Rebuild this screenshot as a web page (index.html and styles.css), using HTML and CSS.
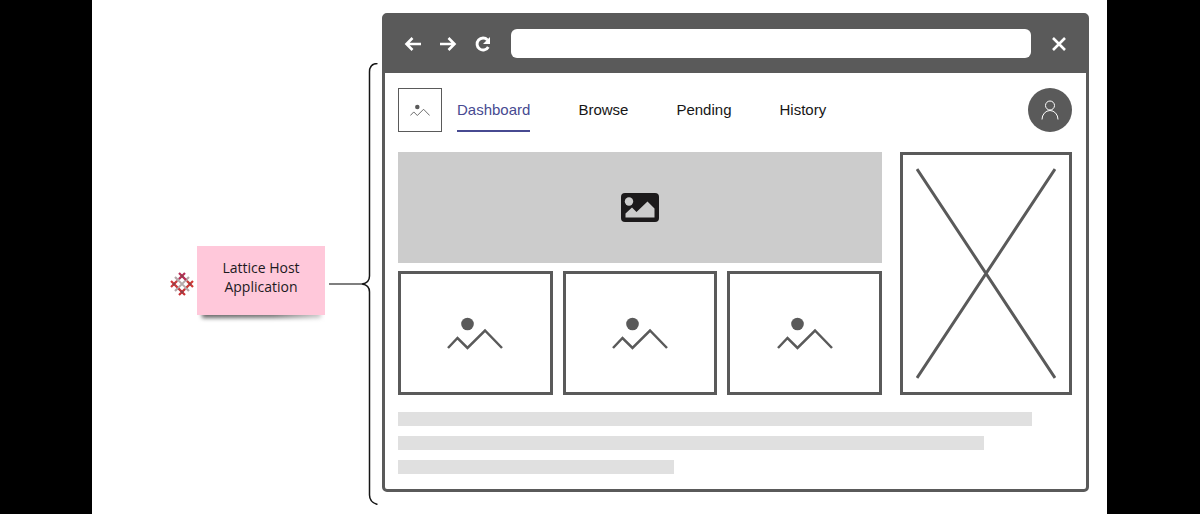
FILE: index.html
```html
<!DOCTYPE html>
<html lang="en">
<head>
<meta charset="utf-8">
<title>Lattice Host Application</title>
<link rel="stylesheet" href="styles.css">
</head>
<body>
<svg class="defs" aria-hidden="true">
  <symbol id="picture" viewBox="0 0 56 34">
    <circle cx="20.500" cy="7" r="6.300" fill="currentColor"/>
    <path d="M1 31 10.500 21 20.500 31 38 13.500 55 31" fill="none" stroke="currentColor" stroke-width="2.500"/>
  </symbol>
</svg>
<main class="board">
  <section class="legend">
    <svg class="lattice" viewBox="0 0 24 24" fill="none" stroke-width="2.200" aria-hidden="true">
      <path d="M4 12l8-8M8 16l8-8M12 20l8-8M4 12l8 8M8 8l8 8M12 4l8 8" stroke="#b5acac" stroke-width="1.800"/>
      <path d="M5 5l3 3M19 5l-3 3M5 19l3-3M19 19l-3-3" stroke="#b5a6a8"/>
      <path d="M9 7l6-6M9 1l7 7" stroke="#b82f58"/>
      <path d="M1 9l6.500 6.500M1 15l6-6" stroke="#cf3a3c"/>
      <path d="M17 9l6 6M16.500 15.500l6.500-6.500" stroke="#d23a35"/>
      <path d="M8.500 16.500l6.500 6.500M9 23l6-6" stroke="#c93236"/>
      <path d="M11 3l2 2M3 13l2-2M19 11l2 2M11 19l2 2" stroke="#8d4048"/>
    </svg>
    <p class="note">Lattice Host Application</p>
  </section>
  <svg class="brace" viewBox="0 0 49 442" fill="none" aria-hidden="true">
    <path d="M0 221H33" stroke="#555" stroke-width="1.300"/>
    <path d="M48.500 .500C43 .500 40.500 4 40.500 9V213Q40.500 220 33 221Q40.500 222 40.500 229V432C40.500 437 43 440 48.500 441.500" stroke="#161616" stroke-width="1.500"/>
  </svg>
  <section class="window">
    <header class="toolbar">
      <button class="tool" aria-label="Back"><svg viewBox="0 0 18 18"><path d="M17 9H2.500M8.500 3 2.500 9l6 6"/></svg></button>
      <button class="tool" aria-label="Forward"><svg viewBox="0 0 18 18"><path d="M1 9h14.500M9.500 3l6 6-6 6"/></svg></button>
      <button class="tool" aria-label="Reload"><svg viewBox="0 0 18 18"><path d="M14.300 12A6 6 0 1 1 13.500 5" stroke-width="2.900"/><path d="M16 2v7H9z" fill="#fff" stroke="none"/></svg></button>
      <input class="address" type="text" aria-label="Address">
      <button class="tool" aria-label="Close"><svg viewBox="0 0 18 18"><path d="m3 3 12 12M15 3 3 15"/></svg></button>
    </header>
    <div class="page">
      <div class="topbar">
        <div class="logo"><svg><use href="#picture"/></svg></div>
        <nav class="nav">
          <a class="link active" href="#">Dashboard</a>
          <a class="link" href="#">Browse</a>
          <a class="link" href="#">Pending</a>
          <a class="link" href="#">History</a>
        </nav>
        <button class="avatar" aria-label="Account">
          <svg viewBox="0 0 18 20"><circle cx="9" cy="5.500" r="4.500"/><path d="M1 19.500a8 9 0 0 1 16 0"/></svg>
        </button>
      </div>
      <div class="content">
        <div class="main">
          <div class="hero">
            <svg viewBox="0 0 38 29"><rect width="38" height="29" rx="4" fill="#1c1a1b"/><circle cx="8" cy="8.500" r="4.200" fill="#ccc"/><path d="M4.500 24.500V20.500L11 14.500 15.500 19 26.500 8.500 33.500 15.500V24.500z" fill="#ccc"/></svg>
          </div>
          <div class="thumbs">
            <div class="thumb"><svg><use href="#picture"/></svg></div>
            <div class="thumb"><svg><use href="#picture"/></svg></div>
            <div class="thumb"><svg><use href="#picture"/></svg></div>
          </div>
        </div>
        <aside class="side">
          <svg viewBox="0 0 140 210" preserveAspectRatio="none"><path d="M1 1 139 209M139 1 1 209"/></svg>
        </aside>
      </div>
      <div class="lines">
        <div class="line long"></div>
        <div class="line medium"></div>
        <div class="line short"></div>
      </div>
    </div>
  </section>
</main>
</body>
</html>
```
FILE: styles.css
```css
* { box-sizing: border-box; }
body { margin: 0; background: #000; font-family: "Liberation Sans", Arial, sans-serif; }
button { border: 0; padding: 0; background: none; cursor: pointer; }
.defs { display: none; }

.board {
  position: relative;
  z-index: 0;
  display: flex;
  align-items: flex-start;
  gap: 4px;
  min-height: 100vh;
  margin: 0 93px 0 92px;
  padding: 13px 18px 8px 78px;
  background: #fff;
}

.legend {
  display: flex;
  align-items: center;
  gap: 3px;
  height: 442px;
  margin-top: 50px;
}
.lattice { width: 24px; height: 24px; }
.note {
  position: relative;
  width: 128px;
  margin: 0 0 8px;
  padding: 12px 20px 19px;
  background: #ffc8da;
  color: #1c1a1e;
  font: 14px/19px "Open Sans", "Noto Sans", sans-serif;
  text-align: center;
}
.note::after {
  content: "";
  position: absolute;
  z-index: -1;
  left: 5px;
  right: 4px;
  bottom: -3px;
  height: 8px;
  background: linear-gradient(90deg, #666, #777 60%, #ccc);
  filter: blur(2px);
}
.brace { flex: none; width: 49px; height: 442px; margin-top: 50px; }

.window {
  flex: 1;
  min-width: 0;
  border: 3px solid #5a5a5a;
  border-radius: 5px;
}
.toolbar {
  display: flex;
  align-items: center;
  gap: 17px;
  height: 57px;
  padding: 0 18px 2px 19px;
  background: #5a5a5a;
}
.tool { flex: none; width: 18px; height: 18px; }
.tool svg { display: block; fill: none; stroke: #fff; stroke-width: 2.6; }
.address {
  flex: 1;
  min-width: 0;
  height: 29px;
  margin: 0 2px;
  border: 0;
  border-radius: 6px;
  background: #fff;
}

.page { padding: 15px 14px 15px 13px; }
.topbar { display: flex; align-items: center; gap: 15px; }
.logo {
  display: grid;
  place-items: center;
  width: 44px;
  height: 44px;
  border: 1px solid #5a5a5a;
  color: #5a5a5a;
}
.logo svg { width: 20px; height: 13px; }
.nav { display: flex; flex: 1; gap: 48px; }
.link {
  padding: 12px 0 10px;
  border-bottom: 2px solid transparent;
  color: #161616;
  font-size: 15px;
  line-height: 20px;
  text-decoration: none;
}
.active { border-color: #474a91; color: #474a91; }
.avatar {
  display: grid;
  place-items: center;
  width: 44px;
  height: 44px;
  border-radius: 50%;
  background: #5a5a5a;
}
.avatar svg { width: 18px; height: 20px; fill: none; stroke: #fff; }

.content { display: flex; gap: 18px; margin-top: 20px; }
.main { flex: 1; display: grid; gap: 8px; }
.hero { display: grid; place-items: center; height: 111px; background: #ccc; }
.hero svg { width: 38px; height: 29px; }
.thumbs { display: grid; grid-template-columns: repeat(3, 1fr); gap: 10px; }
.thumb {
  display: grid;
  place-items: center;
  height: 124px;
  padding-top: 2px;
  border: 3px solid #5a5a5a;
  color: #5a5a5a;
}
.thumb svg { width: 56px; height: 34px; }
.side { width: 172px; padding: 13px; border: 3px solid #5a5a5a; }
.side svg { display: block; width: 100%; height: 100%; fill: none; stroke: #5a5a5a; stroke-width: 3; }

.lines { display: grid; gap: 10px; margin-top: 17px; }
.line { height: 14px; background: #e0e0e0; }
.long { width: 94%; }
.medium { width: 87%; }
.short { width: 41%; }
```
